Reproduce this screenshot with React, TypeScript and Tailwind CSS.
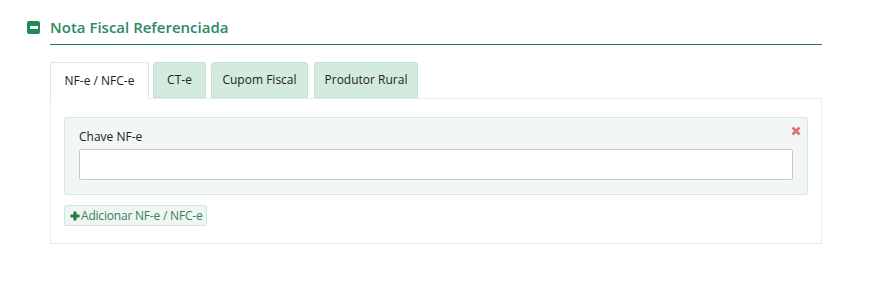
import React from "react";

export default function App() {
  const font = { fontFamily: '"Open Sans", "Noto Sans", sans-serif' };
  return (
    <div className="w-[870px] h-[284px] bg-white" style={font}>
      <div className="pl-[27px] pt-[17px] w-[822px]">
        <div className="flex items-center">
          <div className="w-[13px] h-[13px] rounded-[2px] bg-[#1f8a5a] flex items-center justify-center">
            <div className="w-[8px] h-[3px] bg-white" />
          </div>
          <div className="ml-[10px] text-[15px] font-semibold text-[#2b8a66] leading-[20px]">
            Nota Fiscal Referenciada
          </div>
        </div>
        <div className="ml-[23px] mt-[7px] h-px bg-[#1d7f53]" />
      </div>
      <div className="ml-[50px] mt-[17px] w-[772px]">
        <div className="flex items-end gap-[4px] relative z-10">
          <div className="h-[37px] w-[99px] bg-white border border-[#dde6e2] border-b-white rounded-t-[3px] flex items-center justify-center text-[12px] text-[#222]">
            NF-e / NFC-e
          </div>
          <div className="h-[36px] w-[53px] bg-[#d4eadf] border border-[#c4e0d2] rounded-t-[3px] flex items-center justify-center text-[12px] text-[#222] mb-px">
            CT-e
          </div>
          <div className="h-[36px] w-[97px] bg-[#d4eadf] border border-[#c4e0d2] rounded-t-[3px] flex items-center justify-center text-[12px] text-[#222] ml-px mb-px">
            Cupom Fiscal
          </div>
          <div className="h-[36px] w-[104px] bg-[#d4eadf] border border-[#c4e0d2] rounded-t-[3px] flex items-center justify-center text-[12px] text-[#222] ml-[2px] mb-px">
            Produtor Rural
          </div>
        </div>
        <div className="-mt-px border border-[#e8ecea] h-[146px] px-[13px] pt-[18px]">
          <div className="relative bg-[#f2f7f5] border border-[#d5e9df] rounded-[2px] h-[78px] px-[14px] pt-[11px]">
            <div className="text-[12px] text-[#222] leading-[16px]">Chave NF-e</div>
            <div className="mt-[4px] h-[31px] w-[714px] bg-white border border-[#c9c9c9] rounded-[2px]" />
            <div className="absolute right-[6px] top-[8px] text-[#d7727a]">
              <svg width="10" height="10" viewBox="0 0 10 10">
                <path d="M1.5 1.5 L8.5 8.5 M8.5 1.5 L1.5 8.5" stroke="currentColor" strokeWidth="2.6" strokeLinecap="butt" />
              </svg>
            </div>
          </div>
          <div className="mt-[10px] inline-flex items-center h-[21px] pl-[5px] pr-[4px] bg-[#eef6f2] border border-[#cfe6da] rounded-[2px] text-[12px] tracking-[-0.2px] text-[#3a7d5e]">
            <svg width="10" height="10" viewBox="0 0 10 10" className="mr-[1px]">
              <path d="M5 0.5 V9.5 M0.5 5 H9.5" stroke="#1f7a3e" strokeWidth="3" />
            </svg>
            Adicionar NF-e / NFC-e
          </div>
        </div>
      </div>
    </div>
  );
}
